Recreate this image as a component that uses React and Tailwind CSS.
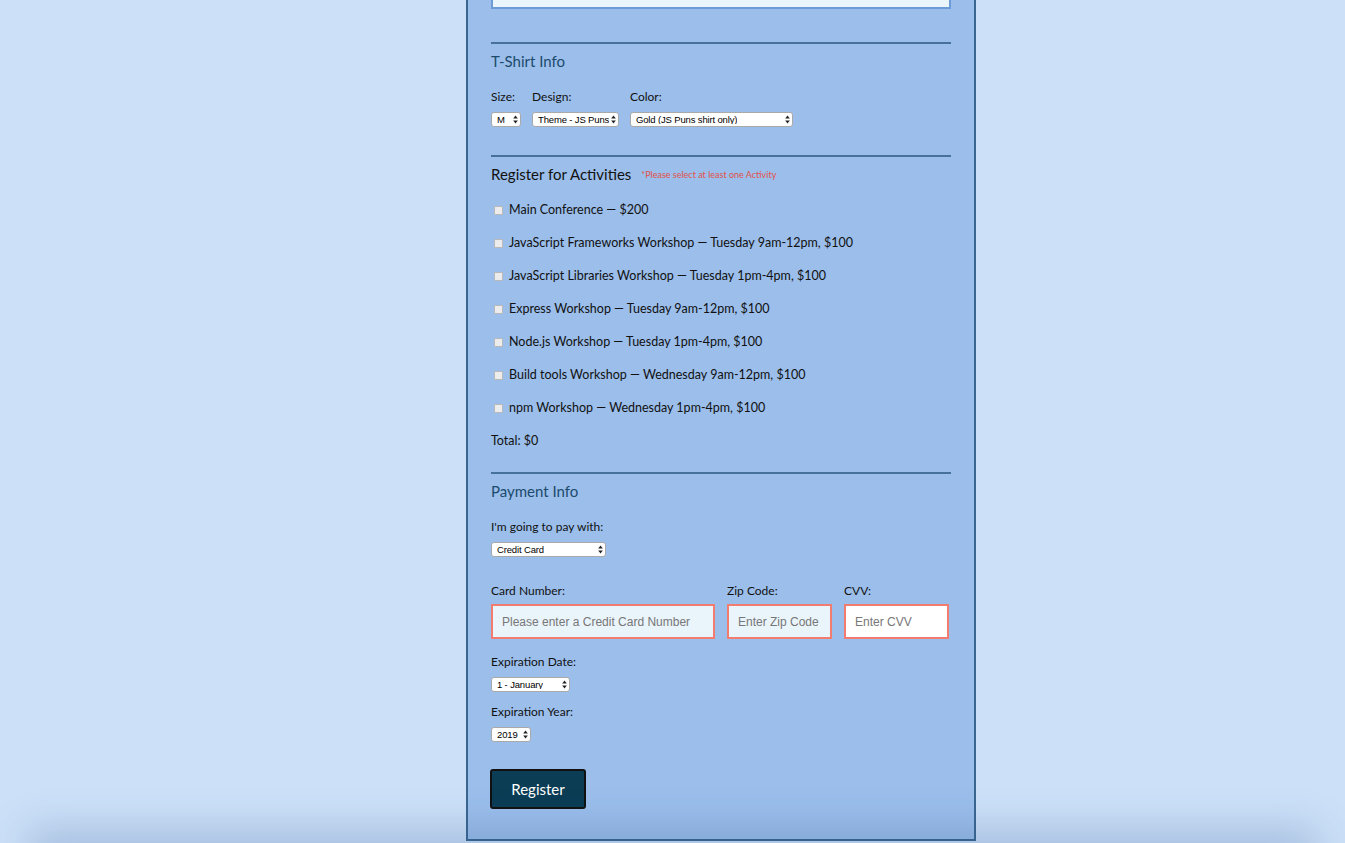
import React from "react";

const font = { fontFamily: "Lato, 'Noto Sans', sans-serif" };

const Arrows = () => (
  <svg width="5" height="9" viewBox="0 0 5 9" className="shrink-0">
    <path d="M2.5 0.5 L4.8 3.6 L0.2 3.6 Z" fill="#222" />
    <path d="M2.5 8.5 L4.8 5.4 L0.2 5.4 Z" fill="#222" />
  </svg>
);

const FakeSelect = ({ value, width }) => (
  <div
    className="h-[15px] flex items-center justify-between gap-[1px] bg-white border border-[#a9a9a9] rounded-[3px] pl-[5px] pr-[2px] text-[9.5px] tracking-[-0.15px] text-black leading-none"
    style={{ width, fontFamily: "'Liberation Sans', Arial, sans-serif" }}
  >
    <span className="whitespace-nowrap overflow-hidden">{value}</span>
    <Arrows />
  </div>
);

const Heading = ({ children, dark }) => (
  <div className={`h-[34px] flex items-center text-[15px] ${dark ? "text-[#111]" : "text-[#1c4b6c]"}`}>
    {children}
  </div>
);

const Rule = () => <div className="h-[2px] bg-[#47719a]" />;

const activities = [
  "Main Conference — $200",
  "JavaScript Frameworks Workshop — Tuesday 9am-12pm, $100",
  "JavaScript Libraries Workshop — Tuesday 1pm-4pm, $100",
  "Express Workshop — Tuesday 9am-12pm, $100",
  "Node.js Workshop — Tuesday 1pm-4pm, $100",
  "Build tools Workshop — Wednesday 9am-12pm, $100",
  "npm Workshop — Wednesday 1pm-4pm, $100",
];

const Field = ({ placeholder, className }) => (
  <div
    className={`h-[35px] border-2 border-[#f27c6f] flex items-center px-[9px] text-[12px] text-[#777] ${className}`}
    style={{ fontFamily: "'Liberation Sans', Arial, sans-serif" }}
  >
    {placeholder}
  </div>
);

export default function App() {
  return (
    <div className="h-[843px] overflow-hidden bg-[#cce0f8] relative" style={font}>
      <div className="ml-[466px] w-[510px] bg-[#9bbeeb] border-2 border-t-0 border-[#3a678f] px-[23px] pb-[30px] text-[#111]">
        {/* bottom of the previous input, scrolled off the top */}
        <div className="h-[9px] bg-[#eaf4fb] border-2 border-t-0 border-[#6d9bd8]" />

        <div className="h-[33px]" />
        <Rule />
        <Heading>T-Shirt Info</Heading>
        <div className="mt-[11px] flex gap-[11px] text-[12px]">
          <div>
            <div className="h-[16px] flex items-center">Size:</div>
            <div className="mt-[7px]"><FakeSelect value="M" width="30px" /></div>
          </div>
          <div>
            <div className="h-[16px] flex items-center">Design:</div>
            <div className="mt-[7px]"><FakeSelect value="Theme - JS Puns" width="87px" /></div>
          </div>
          <div>
            <div className="h-[16px] flex items-center">Color:</div>
            <div className="mt-[7px]"><FakeSelect value="Gold (JS Puns shirt only)" width="163px" /></div>
          </div>
        </div>

        <div className="h-[28px]" />
        <Rule />
        <Heading dark>
          <span>Register for Activities</span>
          <span className="ml-[10px] text-[9px] text-[#e0524a] mt-[2px]">*Please select at least one Activity</span>
        </Heading>
        <div className="pt-[3px]">
          {activities.map((a) => (
            <div key={a} className="h-[33px] flex items-center text-[12.5px]">
              <span className="w-[9px] h-[9px] ml-[3px] mr-[6px] border border-[#b8b8b8] bg-[#ececec] rounded-[1px]" />
              {a}
            </div>
          ))}
          <div className="h-[33px] flex items-center text-[12.5px]">Total: $0</div>
        </div>

        <div className="h-[14px]" />
        <Rule />
        <Heading>Payment Info</Heading>
        <div className="mt-[11px] h-[16px] flex items-center text-[12px]">I'm going to pay with:</div>
        <div className="mt-[7px]"><FakeSelect value="Credit Card" width="115px" /></div>

        <div className="mt-[26px] flex gap-[12px] text-[12px]">
          <div className="w-[224px]">
            <div className="h-[16px] flex items-center">Card Number:</div>
            <Field className="mt-[5px] bg-[#eaf4fb]" placeholder="Please enter a Credit Card Number" />
          </div>
          <div className="w-[105px]">
            <div className="h-[16px] flex items-center">Zip Code:</div>
            <Field className="mt-[5px] bg-[#eaf4fb]" placeholder="Enter Zip Code" />
          </div>
          <div className="w-[105px]">
            <div className="h-[16px] flex items-center">CVV:</div>
            <Field className="mt-[5px] bg-white" placeholder="Enter CVV" />
          </div>
        </div>

        <div className="mt-[15px] h-[16px] flex items-center text-[12px]">Expiration Date:</div>
        <div className="mt-[7px]"><FakeSelect value="1 - January" width="79px" /></div>
        <div className="mt-[12px] h-[16px] flex items-center text-[12px]">Expiration Year:</div>
        <div className="mt-[7px]"><FakeSelect value="2019" width="40px" /></div>

        <button className="mt-[27px] -ml-[1px] w-[96px] h-[40px] bg-[#0b3d55] border-2 border-[#111] rounded-[3px] text-white text-[15px]">
          Register
        </button>
      </div>

      {/* soft shadow along the bottom edge of the window */}
      <div className="pointer-events-none absolute left-[40px] right-[40px] bottom-[-20px] h-[20px] shadow-[0_0_40px_12px_rgba(40,80,140,0.25)]" />
    </div>
  );
}
